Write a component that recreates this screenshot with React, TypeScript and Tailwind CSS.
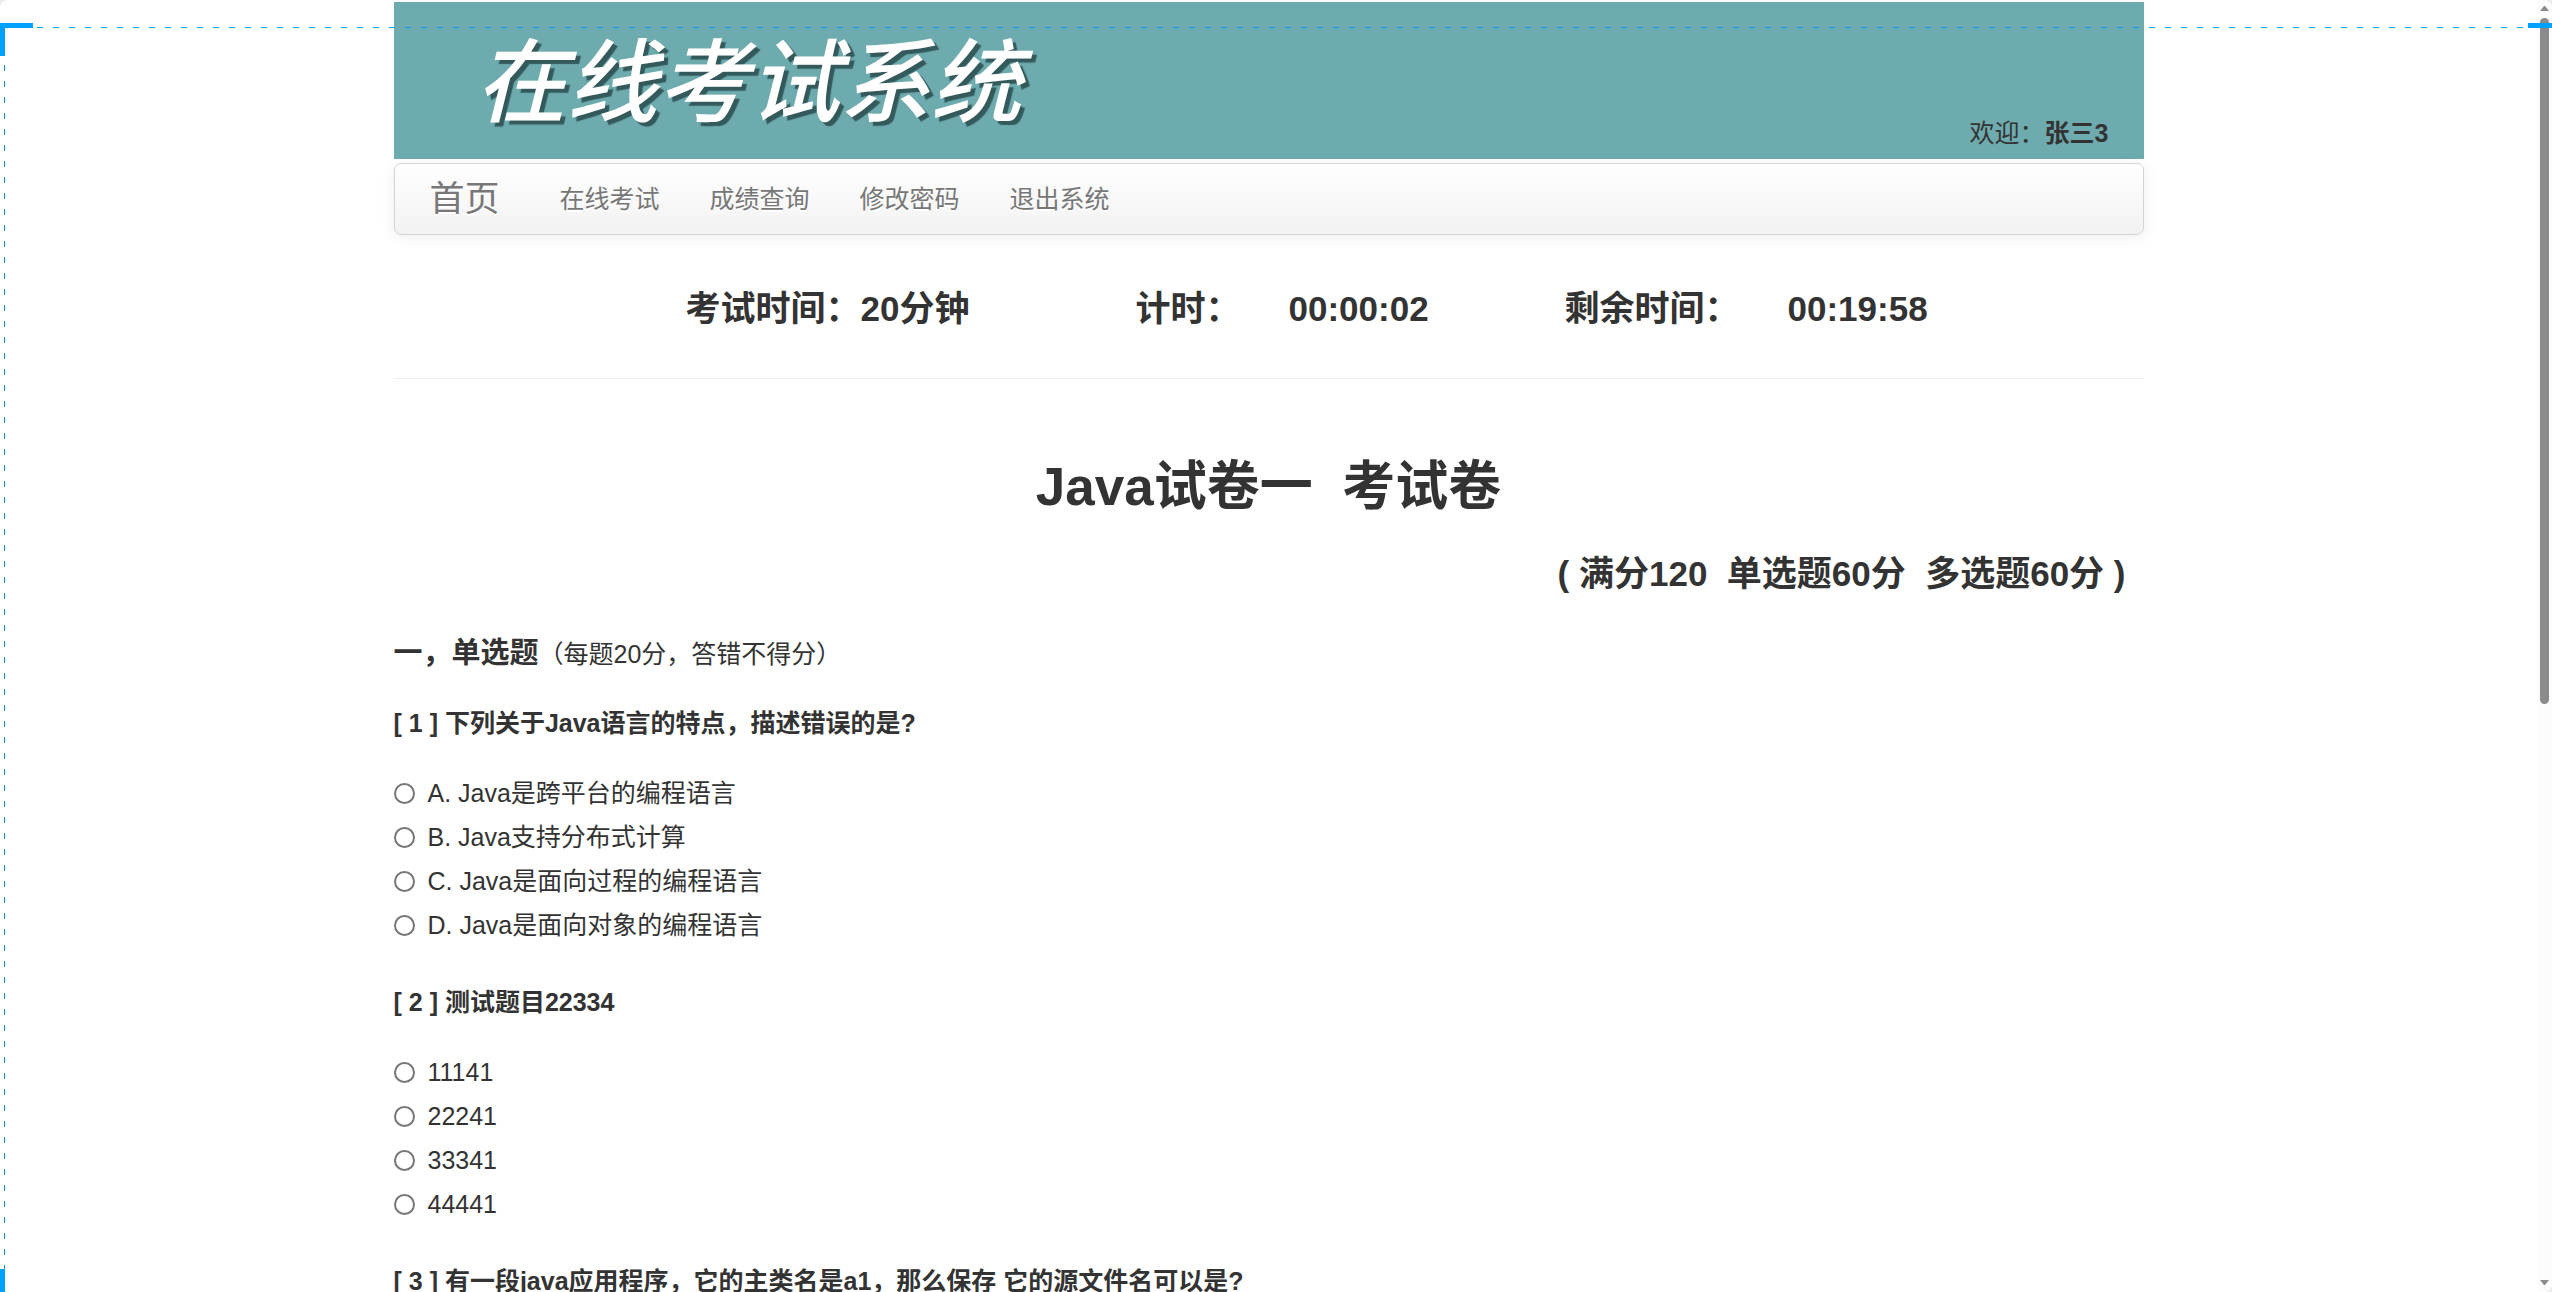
import React from 'react';

interface Question {
    id: number;
    title: string;
    options: string[];
}

const NAV_LINKS = ['在线考试', '成绩查询', '修改密码', '退出系统'];

const QUESTIONS: Question[] = [
    {
        id: 1,
        title: '下列关于Java语言的特点，描述错误的是?',
        options: [
            'A. Java是跨平台的编程语言',
            'B. Java支持分布式计算',
            'C. Java是面向过程的编程语言',
            'D. Java是面向对象的编程语言',
        ],
    },
    {
        id: 2,
        title: '测试题目22334',
        options: ['11141', '22241', '33341', '44441'],
    },
    {
        id: 3,
        title: '有一段java应用程序，它的主类名是a1，那么保存 它的源文件名可以是?',
        options: [],
    },
];

const Banner: React.FC<{ user: string }> = ({ user }) => (
    <header className="flex h-[157px] items-start justify-between bg-[#6dabae] pl-[82px] pr-[35px]">
        <h1 className="pt-8 text-[91px] leading-[100px] font-medium italic text-white [text-shadow:4px_4px_1px_#33595b]">
            在线考试系统
        </h1>
        <p className="self-end pb-2 leading-[35px]">
            欢迎：<strong>{user}</strong>
        </p>
    </header>
);

const NavBar: React.FC = () => (
    <nav className="mt-1 flex h-[72px] items-center rounded-[7px] border border-[#d4d4d4] bg-linear-to-b from-white to-[#f2f2f2] pl-[35px] text-[#777] shadow-[0_2px_16px_rgba(0,0,0,0.07)] [text-shadow:0_2px_0_#fff]">
        <a href="#home" className="mr-[60px] text-[35px] leading-[40px]">
            首页
        </a>
        <ul className="flex gap-[50px]">
            {NAV_LINKS.map((label) => (
                <li key={label}>
                    <a href="#nav">{label}</a>
                </li>
            ))}
        </ul>
    </nav>
);

const TimerBar: React.FC = () => (
    <div className="flex h-[144px] items-center border-b border-[#eee] pt-1 pl-[292px] text-[35px] leading-[40px] font-bold">
        <span className="w-[450px]">考试时间：20分钟</span>
        <span className="flex w-[429px] gap-12">
            <span>计时：</span>
            <span>00:00:02</span>
        </span>
        <span className="flex gap-12">
            <span>剩余时间：</span>
            <span>00:19:58</span>
        </span>
    </div>
);

const QuestionItem: React.FC<{ question: Question }> = ({ question }) => (
    <fieldset className="mb-[38px]">
        <legend className="mb-[30px] leading-[35px] font-bold">
            [ {question.id} ] {question.title}
        </legend>
        {question.options.map((option) => (
            <label key={option} className="flex h-11 items-center gap-[13px]">
                <input
                    type="radio"
                    name={`question-${question.id}`}
                    className="size-[21px] shrink-0 appearance-none rounded-full border-2 border-[#767676] bg-white checked:border-[6px]"
                />
                {option}
            </label>
        ))}
    </fieldset>
);

const ScrollBar: React.FC = () => (
    <div className="flex w-[15px] shrink-0 flex-col items-center justify-between bg-[#fcfcfc] pt-[6px] pb-[7px]">
        <div className="flex h-6/11 w-[9px] flex-col gap-[7px]">
            <svg viewBox="0 0 9 5" className="h-[5px] w-[9px] shrink-0" fill="#8b8b8b">
                <path d="M4 0h1l4 5H0z" />
            </svg>
            <div className="flex-1 rounded-full bg-[#8b8b8b]" />
        </div>
        <svg viewBox="0 0 9 5" className="h-[5px] w-[9px]" fill="#8b8b8b">
            <path d="M0 0h9L5 5H4z" />
        </svg>
    </div>
);

/**
 * Dashed selection frame with corner handles, drawn over the page
 */
const CaptureFrame: React.FC = () => (
    <div className="pointer-events-none absolute inset-0">
        <div className="absolute top-[27px] right-6 left-[37px] h-px bg-[repeating-linear-gradient(to_right,#0a9cf5_0px,#0a9cf5_6px,transparent_6px,transparent_16px)]" />
        <div className="absolute top-[65px] bottom-[23px] left-1 w-px bg-[repeating-linear-gradient(to_bottom,#0a9cf5_0px,#0a9cf5_6px,transparent_6px,transparent_16px)]" />
        <div className="absolute top-[23px] left-0 h-[33px] w-[33px] [border-top:5px_solid_#00a0ff] [border-left:5px_solid_#00a0ff]" />
        <div className="absolute top-[23px] right-0 h-[5px] w-6 bg-[#00a0ff]" />
        <div className="absolute bottom-0 left-0 h-[23px] w-[5px] bg-[#00a0ff]" />
    </div>
);

const App: React.FC = () => {
    return (
        <div className="relative h-screen bg-[#ececec] font-['Liberation_Sans','Noto_Sans_CJK_SC',sans-serif] text-[25px] leading-[36px] text-[#333]">
            <div className="flex h-full overflow-hidden rounded-lg bg-white">
                <div className="min-w-0 flex-1 overflow-hidden">
                    <div className="mx-auto w-full max-w-[1750px] pt-[2px]">
                        <Banner user="张三3" />
                        <NavBar />
                        <main>
                            <TimerBar />
                            <h2 className="pt-[73px] text-center text-[53px] leading-[70px] font-bold">
                                Java试卷一&nbsp; 考试卷
                            </h2>
                            <h3 className="pt-[32px] pr-[18px] text-right text-[35px] leading-[40px] font-bold">
                                ( 满分120&nbsp; 单选题60分&nbsp; 多选题60分 )
                            </h3>
                            <p className="pt-[39px] leading-[40px]">
                                <strong className="text-[29px]">一，单选题</strong>
                                （每题20分，答错不得分）
                            </p>
                            <form className="pt-8">
                                {QUESTIONS.map((question) => (
                                    <QuestionItem key={question.id} question={question} />
                                ))}
                            </form>
                        </main>
                    </div>
                </div>
                <ScrollBar />
            </div>
            <CaptureFrame />
        </div>
    );
};

export default App;
